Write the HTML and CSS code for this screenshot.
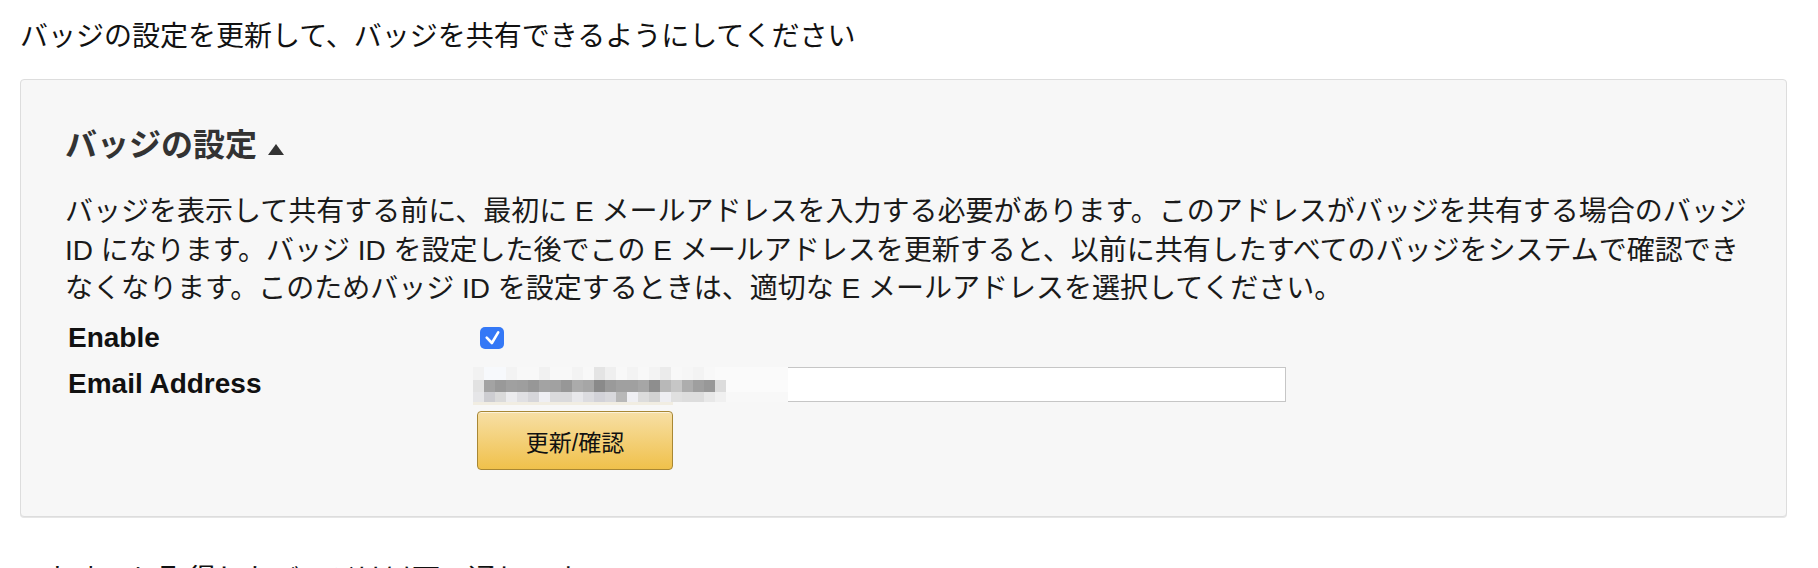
FILE: index.html
```html
<!DOCTYPE html>
<html lang="ja">
  <head>
    <meta charset="utf-8">
    <link rel="stylesheet" href="styles.css">
  </head>
  <body>
    <p class="intro">バッジの設定を更新して、バッジを共有できるようにしてください</p>

    <div class="panel">
      <h2 class="panel-title">バッジの設定<span class="caret"></span></h2>
      <p class="panel-text">
        バッジを表示して共有する前に、最初に E メールアドレスを入力する必要があります。このアドレスがバッジを共有する場合のバッジ<br>
        ID になります。バッジ ID を設定した後でこの E メールアドレスを更新すると、以前に共有したすべてのバッジをシステムで確認でき<br>
        なくなります。このためバッジ ID を設定するときは、適切な E メールアドレスを選択してください。
      </p>

      <div class="fields">
        <label class="field-label" for="enable">Enable</label>
        <div>
          <span class="checkbox" id="enable">
            <svg width="24" height="22" viewBox="0 0 24 22">
              <path d="M6.7 10.6 L11.9 16 L18.2 5.4" fill="none" stroke="#fff" stroke-width="2.6" stroke-linecap="round" stroke-linejoin="round"/>
            </svg>
          </span>
        </div>

        <label class="field-label" for="email">Email Address</label>
        <div class="email-wrap">
          <input class="email" id="email" type="text">
          <span class="mosaic"></span>
        </div>

        <div></div>
        <div>
          <button class="update-btn" type="button">更新/確認</button>
        </div>
      </div>
    </div>

    <p class="outro">これまでに取得したバッジは以下の通りです</p>
  </body>
</html>
```

FILE: styles.css
```css
body {
  margin: 0;
  padding: 18px 31px 0 20px;
  font-family: "Liberation Sans", "Noto Sans CJK JP", sans-serif;
  font-size: 28px;
  line-height: 38.5px;
  color: #111111;
  background-color: white;
  overflow: hidden;
}

p {
  margin: 0;
}

.intro {
  margin-bottom: 22.5px;
}

.panel {
  background-color: #f7f7f7;
  border: 1px solid #dddddd;
  border-radius: 4px;
  box-shadow: 0 1px 0 #e6e6e6;
  padding: 45px 20px 46px 44px;
}

.panel-title {
  margin: 0;
  font-size: 32px;
  line-height: 40px;
  font-weight: bold;
  color: #333333;
}

.caret {
  display: inline-block;
  margin-left: 11px;
  width: 0;
  height: 0;
  border-left: 8.5px solid transparent;
  border-right: 8.5px solid transparent;
  border-bottom: 11px solid #333333;
  vertical-align: 1px;
}

.panel-text {
  margin-top: 28px;
  color: #1a1a1a;
}

.fields {
  display: grid;
  grid-template-columns: 407px 1fr;
  row-gap: 8px;
  align-items: center;
  margin-top: 10.5px;
  padding-left: 3px;
}

.field-label {
  font-weight: bold;
  font-size: 28px;
  line-height: 38px;
}

.checkbox {
  display: block;
  width: 24px;
  height: 22px;
  margin-left: 5px;
  border-radius: 5px;
  background-color: #3478f6;
}

.checkbox svg {
  display: block;
}

.email-wrap {
  position: relative;
  width: 811px;
  height: 35px;
}

.email {
  display: block;
  box-sizing: border-box;
  width: 811px;
  height: 35px;
  margin: 0;
  border: 1px solid #c6c6c6;
  background-color: white;
}

/* blurred address over the field */
.mosaic {
  position: absolute;
  left: -2px;
  top: 0;
  width: 315px;
  height: 38px;
  background-repeat: no-repeat;
  background-size: 315px 13px, 315px 12px, 315px 10px, 200px 3px;
  background-position: 0 0, 0 13px, 0 25px, 0 35px;
  background-image:
    linear-gradient(to right,
      #f2f2f2 0 11px, #f7f9fc 11px 22px, #f7f9fc 22px 33px, #f3f3f3 33px 44px,
      #f8f8f8 44px 55px, #f8f8f8 55px 66px, #f1f1f1 66px 77px, #f8f8f8 77px 88px,
      #f8f8f8 88px 99px, #f3f3f3 99px 110px, #f8f8f8 110px 121px, #e4e4e4 121px 132px,
      #efefef 132px 143px, #f8f8f8 143px 154px, #f3f3f3 154px 165px, #f8f8f8 165px 176px,
      #f3f3f3 176px 187px, #ebebeb 187px 198px, #f8f8f8 198px 209px, #f6f6f6 209px 220px,
      #f3f3f3 220px 231px, #f8f8f8 231px 242px, #fafafa 242px 315px),
    linear-gradient(to right,
      #e2e2e2 0 11px, #a3a3a3 11px 22px, #999999 22px 33px, #a0a0a0 33px 44px,
      #9e9e9e 44px 55px, #979797 55px 66px, #a3a3a3 66px 77px, #a1a1a1 77px 88px,
      #979797 88px 99px, #ababab 99px 110px, #a6a6a6 110px 121px, #8a8a8a 121px 132px,
      #9a9a9a 132px 143px, #a0a0a0 143px 154px, #a0a0a0 154px 165px, #a6a6a6 165px 176px,
      #8e8e8e 176px 187px, #b8b8b8 187px 198px, #c6c6c6 198px 209px, #adadad 209px 220px,
      #9f9f9f 220px 231px, #989898 231px 242px, #dcdcdc 242px 253px, #fbfbfb 253px 315px),
    linear-gradient(to right,
      #e6e6e8 0 11px, #cdcdd1 11px 22px, #dadada 22px 33px, #ececee 33px 44px,
      #e0e0e3 44px 55px, #d6d6da 55px 66px, #efeff3 66px 77px, #dadadc 77px 88px,
      #dadadc 88px 99px, #e8e8eb 99px 110px, #dcdce0 110px 121px, #d2d2d8 121px 132px,
      #d8d8dc 132px 143px, #b8b8b8 143px 154px, #efeff3 154px 165px, #dcdcdc 165px 176px,
      #d2d2d2 176px 187px, #eeeef2 187px 198px, #e0e0e0 198px 209px, #dddddd 209px 220px,
      #dddddd 220px 231px, #e8e8e8 231px 242px, #f0f0f0 242px 253px, #f8f8f8 253px 315px),
    linear-gradient(#f1ede2, #f1ede2);
}

.update-btn {
  display: block;
  box-sizing: border-box;
  width: 196px;
  height: 59px;
  margin-left: 2px;
  padding: 0;
  border: 1px solid #a88734;
  border-radius: 4px;
  background-image: linear-gradient(#f7dfa5, #f0c14b);
  box-shadow: inset 0 1px 0 rgba(255, 255, 255, 0.6);
  font-family: "Liberation Sans", "Noto Sans CJK JP", sans-serif;
  font-size: 23px;
  color: #111111;
}

.outro {
  margin-top: 44px;
}
```
